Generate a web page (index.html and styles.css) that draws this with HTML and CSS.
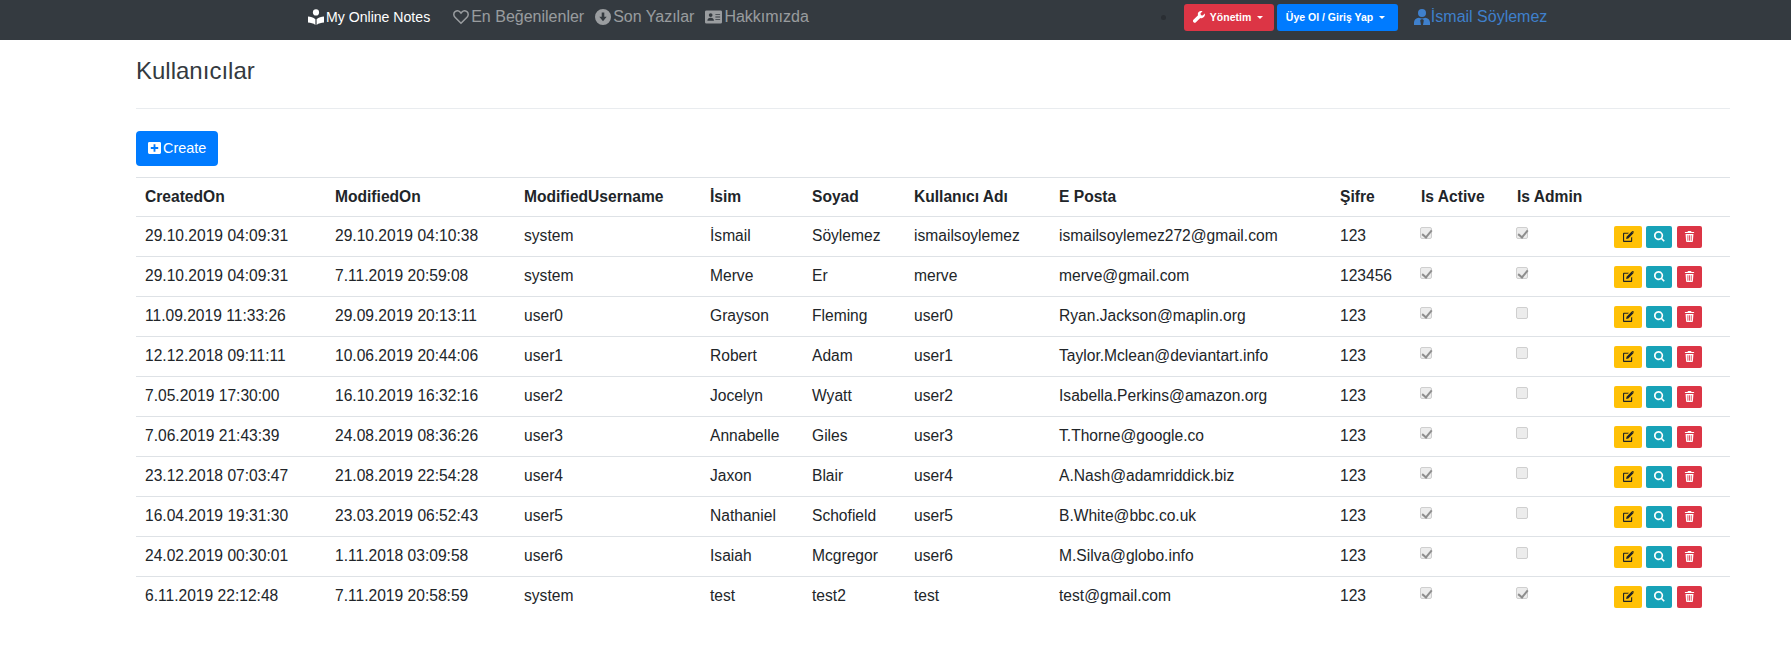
FILE: index.html
```html
<!DOCTYPE html>
<html>
  <head>
    <title>Kullanıcılar</title>
    <meta charset="utf-8">
    <link rel="stylesheet" href="styles.css">
  </head>
  <body>
    <svg class="sprites" width="0" height="0">
      <symbol id="i-reader" viewBox="0 0 16 16"><circle cx="8" cy="3.4" r="3.1"/><path d="M0 7.6c2.6.2 5.4.9 7.4 2.6V16c-2-1.6-4.800-2.300-7.400-2.400zM16 7.600c-2.600.2-5.400.9-7.400 2.600V16c2-1.600 4.800-2.300 7.400-2.400z"/></symbol>
      <symbol id="i-heart" viewBox="0 0 16 16"><path fill="none" stroke="currentColor" stroke-width="1.500" d="M8 14.300 2 8.200C.3 6.400.5 3.900 2.100 2.700c1.700-1.200 3.900-.8 5.200.6l.7.800.7-.8c1.300-1.400 3.500-1.800 5.200-.6 1.600 1.200 1.800 3.700.1 5.500z"/></symbol>
      <symbol id="i-down" viewBox="0 0 16 16"><path fill-rule="evenodd" d="M8 0a8 8 0 1 1 0 16A8 8 0 0 1 8 0zM6.700 3.500v4.300H4.300L8 12.300l3.700-4.500H9.300V3.500z"/></symbol>
      <symbol id="i-card" viewBox="0 0 18 14"><path fill-rule="evenodd" d="M1.500 0h15A1.500 1.500 0 0 1 18 1.500v11a1.500 1.500 0 0 1-1.500 1.500h-15A1.500 1.500 0 0 1 0 12.500v-11A1.500 1.500 0 0 1 1.500 0zM6 3a2 2 0 1 0 0 4 2 2 0 0 0 0-4zM2.500 11h7c0-2-1.400-3.200-3.500-3.200S2.500 9 2.500 11zM11 4v1h5V4zm0 2.500v1h5v-1zM11 9v1h5V9z"/></symbol>
      <symbol id="i-wrench" viewBox="0 0 16 16"><path d="M15.700 3.300 13 6l-2.500-.5L10 3l2.700-2.700C10.500-.5 8 .2 7 2c-.7 1.200-.7 2.500-.3 3.600L.6 11.700a2.100 2.100 0 0 0 0 3 2.100 2.100 0 0 0 3 .6l6.100-6c1.200.4 2.700.3 3.800-.5 1.900-1.200 2.800-3.400 2.200-5.500z"/></symbol>
      <symbol id="i-user" viewBox="0 0 16 16"><circle cx="8" cy="4" r="4"/><path d="M4.800 8.800C2 9 0 11 0 13.600V16h7l-.8-4.500.8-1.200h2l.8 1.200L9 16h7v-2.400C16 11 14 9 11.200 8.800 9.300 9.600 6.700 9.600 4.800 8.800z"/></symbol>
      <symbol id="i-plus" viewBox="0 0 14 14"><path fill-rule="evenodd" d="M1.500 1h11A1.500 1.500 0 0 1 14 2.500v10a1.500 1.500 0 0 1-1.500 1.500h-11A1.500 1.500 0 0 1 0 12.500v-10A1.500 1.500 0 0 1 1.500 1zM6 3.500V6.500H3v2h3v3h2v-3h3v-2H8v-3z"/></symbol>
      <symbol id="i-edit" viewBox="0 0 12 12"><path d="M1.200 2H6.500L5.400 3.100H1.600a.4.4 0 0 0-.4.400v6.800c0 .2.200.4.400.4h6.800a.4.4 0 0 0 .4-.4V7.400L10 6.300v4.500c0 .7-.5 1.200-1.200 1.200H1.200C.5 12 0 11.500 0 10.800V3.200C0 2.500.5 2 1.200 2z"/><path d="M9.500.6 11.400 2.500 5.800 8.100 3.400 8.600 3.900 6.200zM10 0l.6-.0c.2 0 .4 0 .6.200l.6.600c.2.200.2.600 0 .8l-.3.300L9.600.4z"/></symbol>
      <symbol id="i-search" viewBox="0 0 12 12"><path fill-rule="evenodd" d="M5 0a5 5 0 0 1 4.100 7.800l2.700 2.700-1.300 1.300-2.700-2.700A5 5 0 1 1 5 0zm0 1.800a3.200 3.200 0 1 0 0 6.400 3.200 3.200 0 0 0 0-6.400z"/></symbol>
      <symbol id="i-trash" viewBox="0 0 12 12"><path fill-rule="evenodd" d="M4.300 0h3.400l.5 1H11v1.300H1V1h2.800zM1.700 3.200h8.600l-.6 8a.9.9 0 0 1-.9.800H3.200a.9.9 0 0 1-.9-.8zM3.800 4.500v6h.9v-6zm1.800 0v6h.9v-6zm1.800 0v6h.9v-6z"/></symbol>
    </svg>

    <nav class="navbar">
      <a class="brand" href="#"><svg class="icon"><use href="#i-reader"/></svg>My Online Notes</a>
      <ul class="nav-links">
        <li><a href="#"><svg class="icon"><use href="#i-heart"/></svg>En Beğenilenler</a></li>
        <li><a href="#"><svg class="icon"><use href="#i-down"/></svg>Son Yazılar</a></li>
        <li><a href="#"><svg class="icon icon-card"><use href="#i-card"/></svg>Hakkımızda</a></li>
      </ul>
      <div class="nav-right">
        <span class="nav-dot"></span>
        <button class="nav-btn nav-btn-red"><svg class="icon-sm"><use href="#i-wrench"/></svg>Yönetim<span class="caret"></span></button>
        <button class="nav-btn nav-btn-blue">Üye Ol / Giriş Yap<span class="caret"></span></button>
        <a class="nav-user" href="#"><svg class="icon"><use href="#i-user"/></svg>İsmail Söylemez</a>
      </div>
    </nav>

    <main class="content">
      <h3 class="page-title">Kullanıcılar</h3>
      <hr class="rule">
      <a class="btn-create" href="#"><svg class="icon-plus"><use href="#i-plus"/></svg>Create</a>

      <table class="users">
        <colgroup>
          <col class="c1"><col class="c2"><col class="c3"><col class="c4"><col class="c5"><col class="c6"><col class="c7"><col class="c8"><col class="c9"><col class="c10"><col>
        </colgroup>
        <thead>
          <tr>
            <th>CreatedOn</th><th>ModifiedOn</th><th>ModifiedUsername</th><th>İsim</th><th>Soyad</th><th>Kullanıcı Adı</th><th>E Posta</th><th>Şifre</th><th>Is Active</th><th>Is Admin</th><th></th>
          </tr>
        </thead>
        <tbody>
          <tr>
            <td>29.10.2019 04:09:31</td><td>29.10.2019 04:10:38</td><td>system</td><td>İsmail</td><td>Söylemez</td><td>ismailsoylemez</td><td>ismailsoylemez272@gmail.com</td><td>123</td>
            <td><input type="checkbox" checked disabled></td><td><input type="checkbox" checked disabled></td>
            <td class="actions"><a class="act act-edit" href="#"><svg><use href="#i-edit"/></svg></a><a class="act act-view" href="#"><svg><use href="#i-search"/></svg></a><a class="act act-del" href="#"><svg><use href="#i-trash"/></svg></a></td>
          </tr>
          <tr>
            <td>29.10.2019 04:09:31</td><td>7.11.2019 20:59:08</td><td>system</td><td>Merve</td><td>Er</td><td>merve</td><td>merve@gmail.com</td><td>123456</td>
            <td><input type="checkbox" checked disabled></td><td><input type="checkbox" checked disabled></td>
            <td class="actions"><a class="act act-edit" href="#"><svg><use href="#i-edit"/></svg></a><a class="act act-view" href="#"><svg><use href="#i-search"/></svg></a><a class="act act-del" href="#"><svg><use href="#i-trash"/></svg></a></td>
          </tr>
          <tr>
            <td>11.09.2019 11:33:26</td><td>29.09.2019 20:13:11</td><td>user0</td><td>Grayson</td><td>Fleming</td><td>user0</td><td>Ryan.Jackson@maplin.org</td><td>123</td>
            <td><input type="checkbox" checked disabled></td><td><input type="checkbox" disabled></td>
            <td class="actions"><a class="act act-edit" href="#"><svg><use href="#i-edit"/></svg></a><a class="act act-view" href="#"><svg><use href="#i-search"/></svg></a><a class="act act-del" href="#"><svg><use href="#i-trash"/></svg></a></td>
          </tr>
          <tr>
            <td>12.12.2018 09:11:11</td><td>10.06.2019 20:44:06</td><td>user1</td><td>Robert</td><td>Adam</td><td>user1</td><td>Taylor.Mclean@deviantart.info</td><td>123</td>
            <td><input type="checkbox" checked disabled></td><td><input type="checkbox" disabled></td>
            <td class="actions"><a class="act act-edit" href="#"><svg><use href="#i-edit"/></svg></a><a class="act act-view" href="#"><svg><use href="#i-search"/></svg></a><a class="act act-del" href="#"><svg><use href="#i-trash"/></svg></a></td>
          </tr>
          <tr>
            <td>7.05.2019 17:30:00</td><td>16.10.2019 16:32:16</td><td>user2</td><td>Jocelyn</td><td>Wyatt</td><td>user2</td><td>Isabella.Perkins@amazon.org</td><td>123</td>
            <td><input type="checkbox" checked disabled></td><td><input type="checkbox" disabled></td>
            <td class="actions"><a class="act act-edit" href="#"><svg><use href="#i-edit"/></svg></a><a class="act act-view" href="#"><svg><use href="#i-search"/></svg></a><a class="act act-del" href="#"><svg><use href="#i-trash"/></svg></a></td>
          </tr>
          <tr>
            <td>7.06.2019 21:43:39</td><td>24.08.2019 08:36:26</td><td>user3</td><td>Annabelle</td><td>Giles</td><td>user3</td><td>T.Thorne@google.co</td><td>123</td>
            <td><input type="checkbox" checked disabled></td><td><input type="checkbox" disabled></td>
            <td class="actions"><a class="act act-edit" href="#"><svg><use href="#i-edit"/></svg></a><a class="act act-view" href="#"><svg><use href="#i-search"/></svg></a><a class="act act-del" href="#"><svg><use href="#i-trash"/></svg></a></td>
          </tr>
          <tr>
            <td>23.12.2018 07:03:47</td><td>21.08.2019 22:54:28</td><td>user4</td><td>Jaxon</td><td>Blair</td><td>user4</td><td>A.Nash@adamriddick.biz</td><td>123</td>
            <td><input type="checkbox" checked disabled></td><td><input type="checkbox" disabled></td>
            <td class="actions"><a class="act act-edit" href="#"><svg><use href="#i-edit"/></svg></a><a class="act act-view" href="#"><svg><use href="#i-search"/></svg></a><a class="act act-del" href="#"><svg><use href="#i-trash"/></svg></a></td>
          </tr>
          <tr>
            <td>16.04.2019 19:31:30</td><td>23.03.2019 06:52:43</td><td>user5</td><td>Nathaniel</td><td>Schofield</td><td>user5</td><td>B.White@bbc.co.uk</td><td>123</td>
            <td><input type="checkbox" checked disabled></td><td><input type="checkbox" disabled></td>
            <td class="actions"><a class="act act-edit" href="#"><svg><use href="#i-edit"/></svg></a><a class="act act-view" href="#"><svg><use href="#i-search"/></svg></a><a class="act act-del" href="#"><svg><use href="#i-trash"/></svg></a></td>
          </tr>
          <tr>
            <td>24.02.2019 00:30:01</td><td>1.11.2018 03:09:58</td><td>user6</td><td>Isaiah</td><td>Mcgregor</td><td>user6</td><td>M.Silva@globo.info</td><td>123</td>
            <td><input type="checkbox" checked disabled></td><td><input type="checkbox" disabled></td>
            <td class="actions"><a class="act act-edit" href="#"><svg><use href="#i-edit"/></svg></a><a class="act act-view" href="#"><svg><use href="#i-search"/></svg></a><a class="act act-del" href="#"><svg><use href="#i-trash"/></svg></a></td>
          </tr>
          <tr>
            <td>6.11.2019 22:12:48</td><td>7.11.2019 20:58:59</td><td>system</td><td>test</td><td>test2</td><td>test</td><td>test@gmail.com</td><td>123</td>
            <td><input type="checkbox" checked disabled></td><td><input type="checkbox" checked disabled></td>
            <td class="actions"><a class="act act-edit" href="#"><svg><use href="#i-edit"/></svg></a><a class="act act-view" href="#"><svg><use href="#i-search"/></svg></a><a class="act act-del" href="#"><svg><use href="#i-trash"/></svg></a></td>
          </tr>
        </tbody>
      </table>
    </main>
  </body>
</html>
```

FILE: styles.css
```css
* {
  box-sizing: border-box;
}
body {
  margin: 0;
  font-family: "Liberation Sans", Arial, sans-serif;
  font-size: 16px;
  color: #212529;
  background-color: #fff;
}
a {
  text-decoration: none;
}
.sprites {
  position: absolute;
}

/* barra superior */
.navbar {
  display: flex;
  align-items: center;
  height: 40px;
  padding: 0 0 6px 308px;
  background-color: #343a40;
}
.brand {
  display: flex;
  align-items: center;
  color: #fff;
  font-size: 14.1px;
  margin-right: 23px;
}
.icon {
  width: 16px;
  height: 16px;
  margin-right: 2px;
  fill: currentColor;
}
.icon-card {
  width: 17px;
}
.nav-links {
  display: flex;
  gap: 11px;
  margin: 0;
  padding: 0;
  list-style: none;
}
.nav-links a {
  display: flex;
  align-items: center;
  color: rgba(255, 255, 255, 0.5);
}
.nav-right {
  display: flex;
  align-items: center;
  margin-left: 352px;
}
.nav-dot {
  width: 5px;
  height: 5px;
  margin-right: 18px;
  border-radius: 50%;
  background-color: #2a2e33;
}
.nav-btn {
  display: flex;
  align-items: center;
  height: 27px;
  padding: 0 9px;
  border: none;
  border-radius: 3px;
  color: #fff;
  font-family: inherit;
  font-size: 10.5px;
  font-weight: bold;
  white-space: nowrap;
}
.nav-btn-red {
  width: 90px;
  margin-right: 3px;
  background-color: #dc3545;
}
.nav-btn-blue {
  width: 121px;
  margin-right: 16px;
  background-color: #007bff;
}
.icon-sm {
  width: 12px;
  height: 12px;
  margin-right: 5px;
  fill: #fff;
}
.caret {
  margin-left: 6px;
  border-top: 3.5px solid #fff;
  border-left: 3.5px solid transparent;
  border-right: 3.5px solid transparent;
}
.nav-user {
  display: flex;
  align-items: center;
  color: #3f80cc;
}
.nav-user .icon {
  margin-right: 1px;
}

/* contenido */
.content {
  margin: 0 61px 0 136px;
}
.page-title {
  margin: 0;
  padding-top: 16px;
  height: 68px;
  font-size: 24px;
  font-weight: 400;
  line-height: 29px;
  color: #343a40;
}
.rule {
  margin: 0 0 22px;
  border: none;
  border-top: 1px solid #e9ecef;
}
.btn-create {
  display: inline-flex;
  align-items: center;
  height: 35px;
  padding: 0 12px 2px;
  border-radius: 4px;
  background-color: #007bff;
  color: #fff;
  font-size: 14.4px;
}
.icon-plus {
  width: 13px;
  height: 13px;
  margin-right: 2px;
  fill: #fff;
}

/* tabla */
.users {
  width: 100%;
  margin-top: 11px;
  border-collapse: collapse;
  table-layout: fixed;
  font-size: 15.6px;
}
.c1 { width: 190px; }
.c2 { width: 189px; }
.c3 { width: 186px; }
.c4 { width: 102px; }
.c5 { width: 102px; }
.c6 { width: 145px; }
.c7 { width: 281px; }
.c8 { width: 81px; }
.c9 { width: 96px; }
.c10 { width: 97px; }
.users th,
.users td {
  height: 40px;
  padding: 0 0 0 9px;
  text-align: left;
  white-space: nowrap;
  border-top: 1px solid #dee2e6;
}
.users td {
  padding-bottom: 2px;
}
.users thead th {
  height: 39px;
  border-bottom: 1px solid #dee2e6;
}
.users input {
  appearance: none;
  position: relative;
  display: block;
  width: 12px;
  height: 12px;
  margin: -5px 0 0 -1px;
  border: 1px solid #cfcfcf;
  border-radius: 2px;
  background-color: #ececec;
}
.users input:checked::after {
  content: "";
  position: absolute;
  left: 3px;
  top: 0;
  width: 4px;
  height: 8px;
  border-right: 2px solid #8e8e8e;
  border-bottom: 2px solid #8e8e8e;
  transform: rotate(40deg);
}
.users .actions {
  padding-bottom: 0;
  font-size: 0;
}
.act {
  display: inline-flex;
  align-items: center;
  justify-content: center;
  height: 22px;
  margin-right: 4px;
  border-radius: 2px;
  vertical-align: middle;
}
.act svg {
  width: 11px;
  height: 11px;
  fill: currentColor;
}
.act-edit {
  width: 28px;
  background-color: #ffc107;
  color: #212529;
}
.act-view {
  width: 26px;
  margin-right: 5px;
  background-color: #17a2b8;
  color: #fff;
}
.act-del {
  width: 25px;
  background-color: #dc3545;
  color: #fff;
}
```
